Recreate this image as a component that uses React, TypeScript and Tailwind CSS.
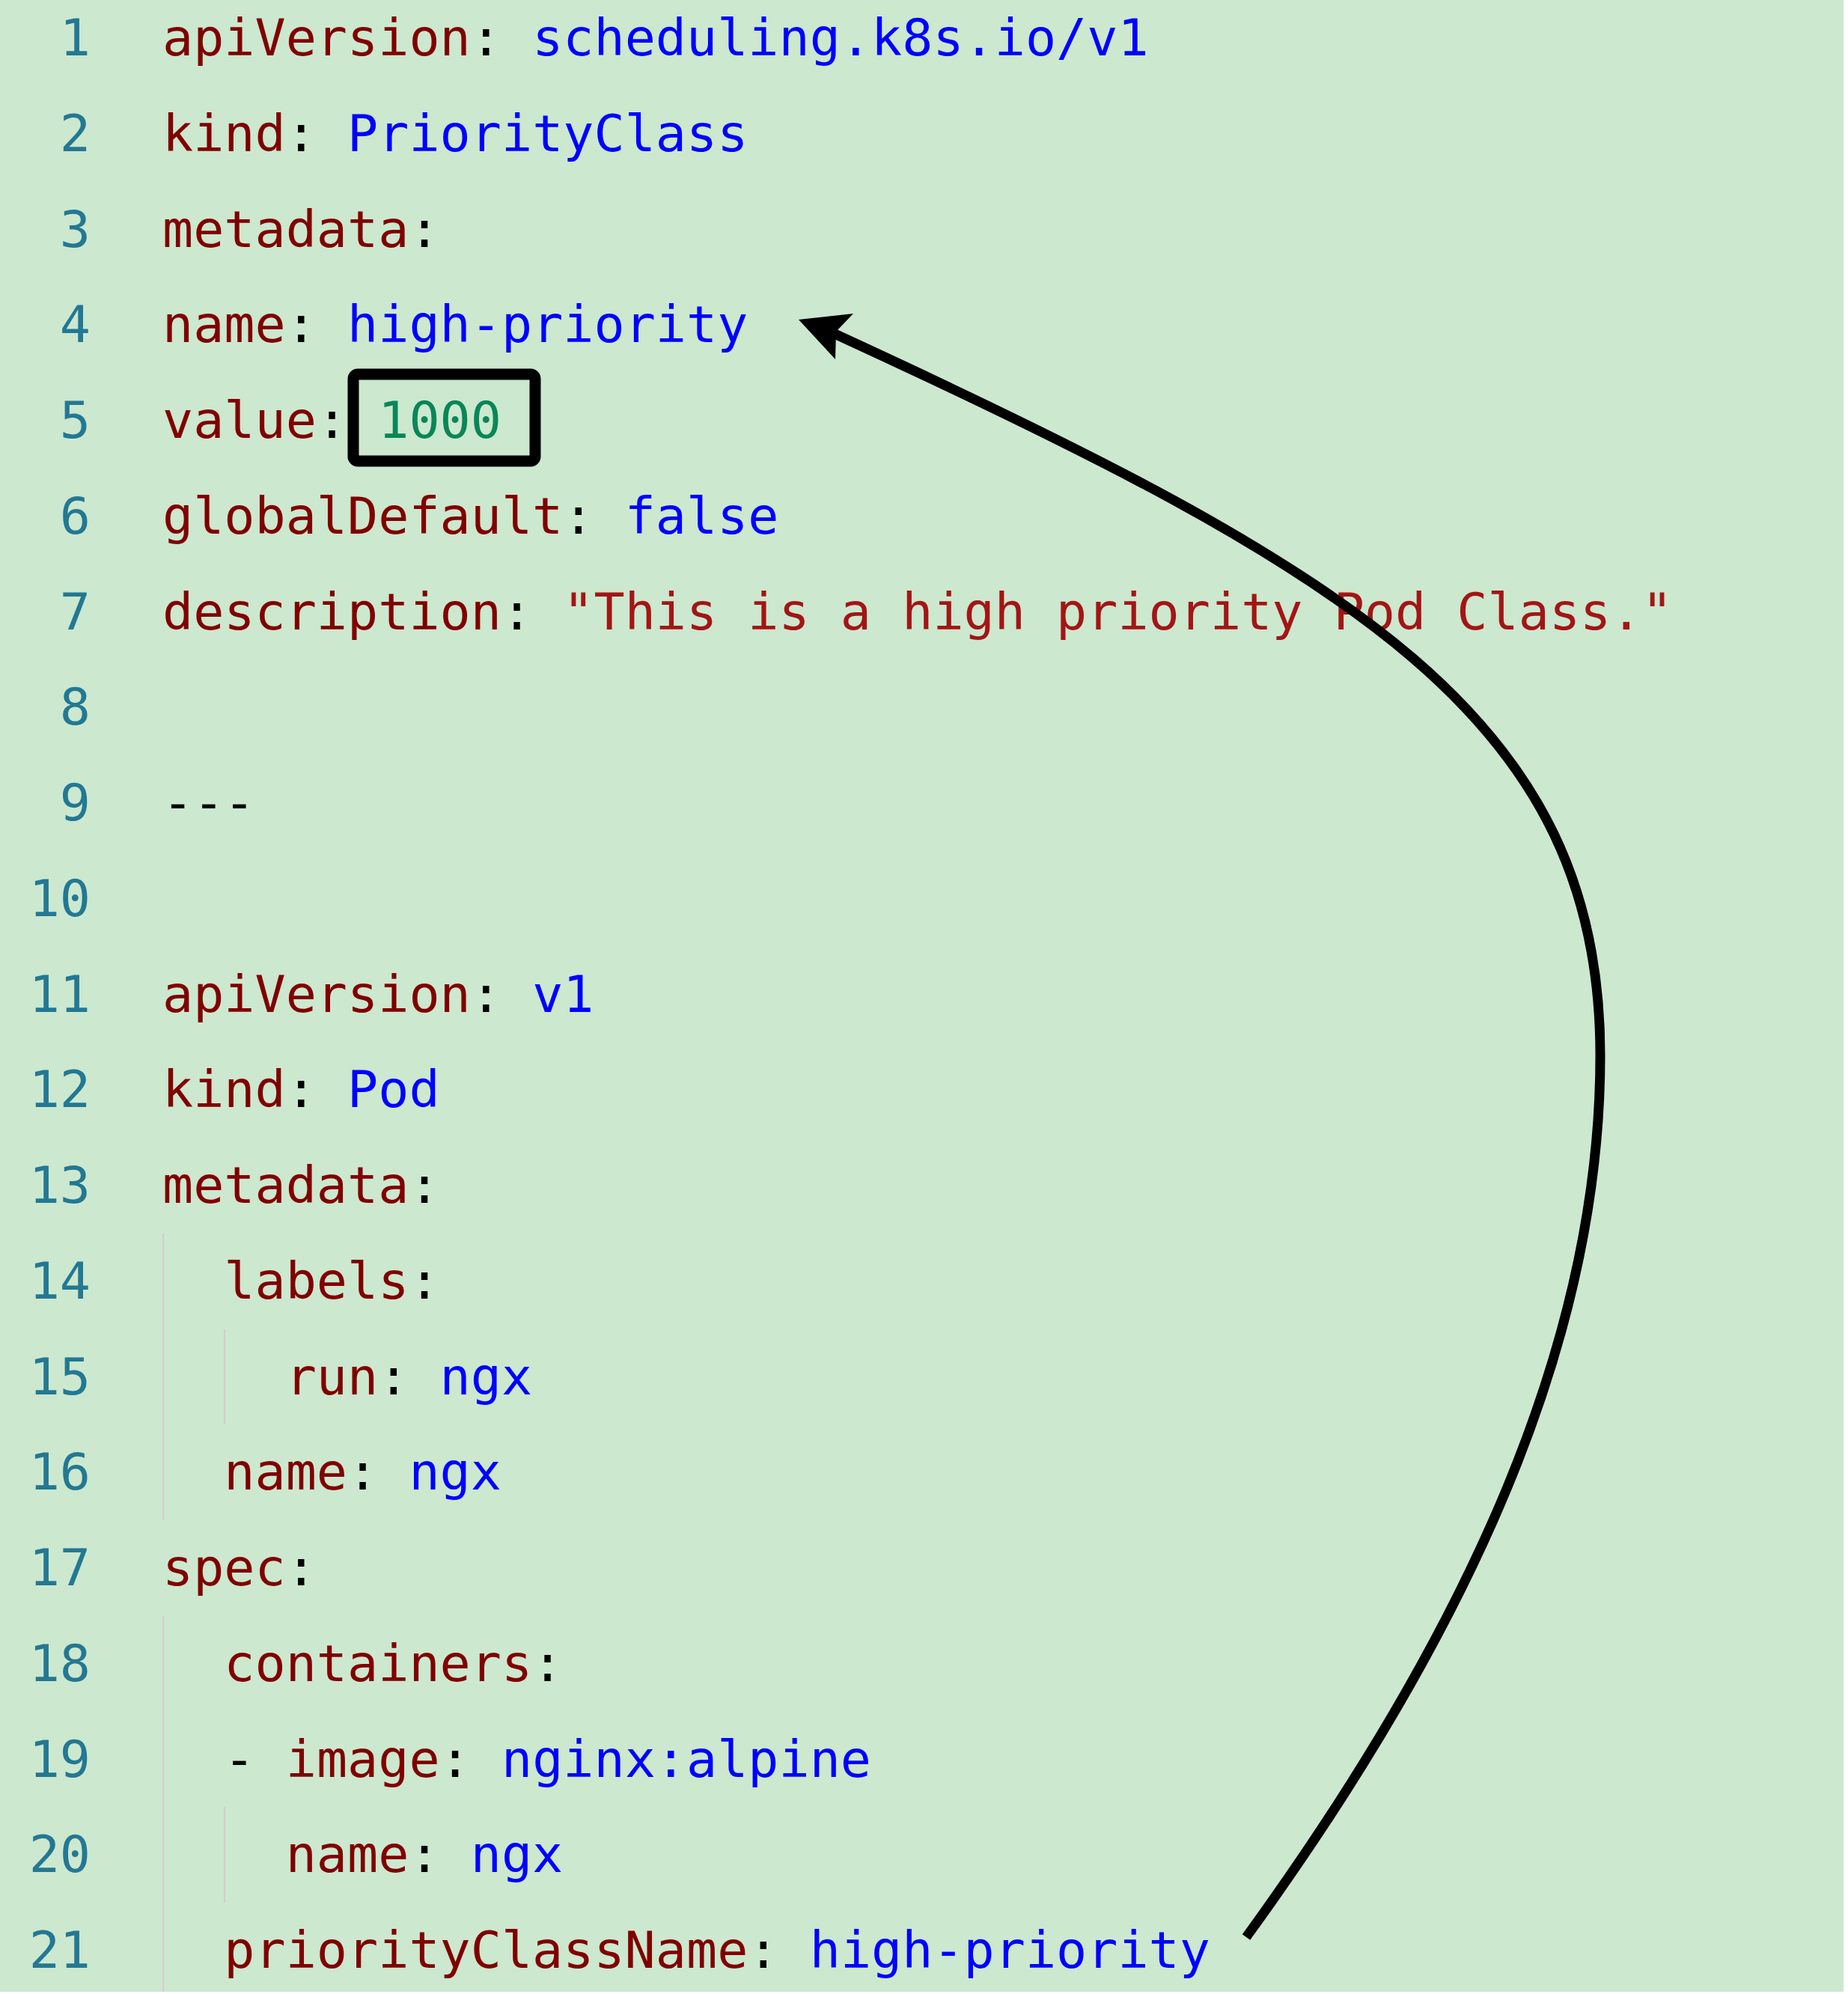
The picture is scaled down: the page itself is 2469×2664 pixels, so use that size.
import React from "react";

type Tok = { t: string; c: string };
type Line = { guides: number; indent: number; toks: Tok[] };

const K = "text-[#800000]";
const V = "text-[#0000ff]";
const P = "text-black";
const N = "text-[#098658]";
const S = "text-[#a31515]";

const kv = (k: string, v?: string, vc: string = V): Tok[] => {
  const out: Tok[] = [
    { t: k, c: K },
    { t: ":", c: P },
  ];
  if (v !== undefined) {
    out.push({ t: " ", c: P });
    out.push({ t: v, c: vc });
  }
  return out;
};

const lines: Line[] = [
  { guides: 0, indent: 0, toks: kv("apiVersion", "scheduling.k8s.io/v1") },
  { guides: 0, indent: 0, toks: kv("kind", "PriorityClass") },
  { guides: 0, indent: 0, toks: kv("metadata") },
  { guides: 0, indent: 0, toks: kv("name", "high-priority") },
  { guides: 0, indent: 0, toks: kv("value", "1000", N) },
  { guides: 0, indent: 0, toks: kv("globalDefault", "false") },
  { guides: 0, indent: 0, toks: kv("description", '"This is a high priority Pod Class."', S) },
  { guides: 0, indent: 0, toks: [] },
  { guides: 0, indent: 0, toks: [{ t: "---", c: P }] },
  { guides: 0, indent: 0, toks: [] },
  { guides: 0, indent: 0, toks: kv("apiVersion", "v1") },
  { guides: 0, indent: 0, toks: kv("kind", "Pod") },
  { guides: 0, indent: 0, toks: kv("metadata") },
  { guides: 1, indent: 1, toks: kv("labels") },
  { guides: 2, indent: 2, toks: kv("run", "ngx") },
  { guides: 1, indent: 1, toks: kv("name", "ngx") },
  { guides: 0, indent: 0, toks: kv("spec") },
  { guides: 1, indent: 1, toks: kv("containers") },
  { guides: 1, indent: 1, toks: [{ t: "- ", c: P }, ...kv("image", "nginx:alpine")] },
  { guides: 2, indent: 2, toks: kv("name", "ngx") },
  { guides: 1, indent: 1, toks: kv("priorityClassName", "high-priority") },
];

const arrowPath =
  "M 1665 2588 C 1965 2175 2138 1790 2138 1410 C 2138 960 1813 767 1113 445";

export default function App() {
  return (
    <div className="bg-white w-[2469px] h-[2664px]">
      <div className="relative w-[2463px] h-[2661px] bg-[#cce8cf] overflow-hidden">
        <div
          className="mt-[-13px] text-[68.4px]"
          style={{ fontFamily: '"DejaVu Sans Mono", "Liberation Mono", monospace' }}
        >
          {lines.map((ln, i) => (
            <div key={i} className="flex items-stretch h-[127.75px] leading-[127.75px] whitespace-pre">
              <span className="w-[121px] shrink-0 text-right text-[#237893]">{i + 1}</span>
              <span className="w-[96px] shrink-0" />
              {Array.from({ length: ln.indent }).map((_, g) => (
                <span
                  key={g}
                  className={
                    g < ln.guides
                      ? "w-[2ch] shrink-0 border-l-2 border-[#d6cbd1]"
                      : "w-[2ch] shrink-0"
                  }
                />
              ))}
              <span>
                {ln.toks.map((tk, j) => (
                  <span key={j} className={tk.c}>
                    {tk.t}
                  </span>
                ))}
              </span>
            </div>
          ))}
        </div>
        <svg
          className="absolute left-0 top-0 pointer-events-none"
          width="2463"
          height="2661"
          viewBox="0 0 2463 2661"
        >
          <rect x="472" y="500" width="243" height="116" rx="6" fill="none" stroke="#000" strokeWidth="15" />
          <path d={arrowPath} fill="none" stroke="#000" strokeWidth="13" strokeLinecap="butt" />
          <polygon points="1067,427 1140,419 1117,443 1116,480" fill="#000" />
        </svg>
      </div>
    </div>
  );
}
